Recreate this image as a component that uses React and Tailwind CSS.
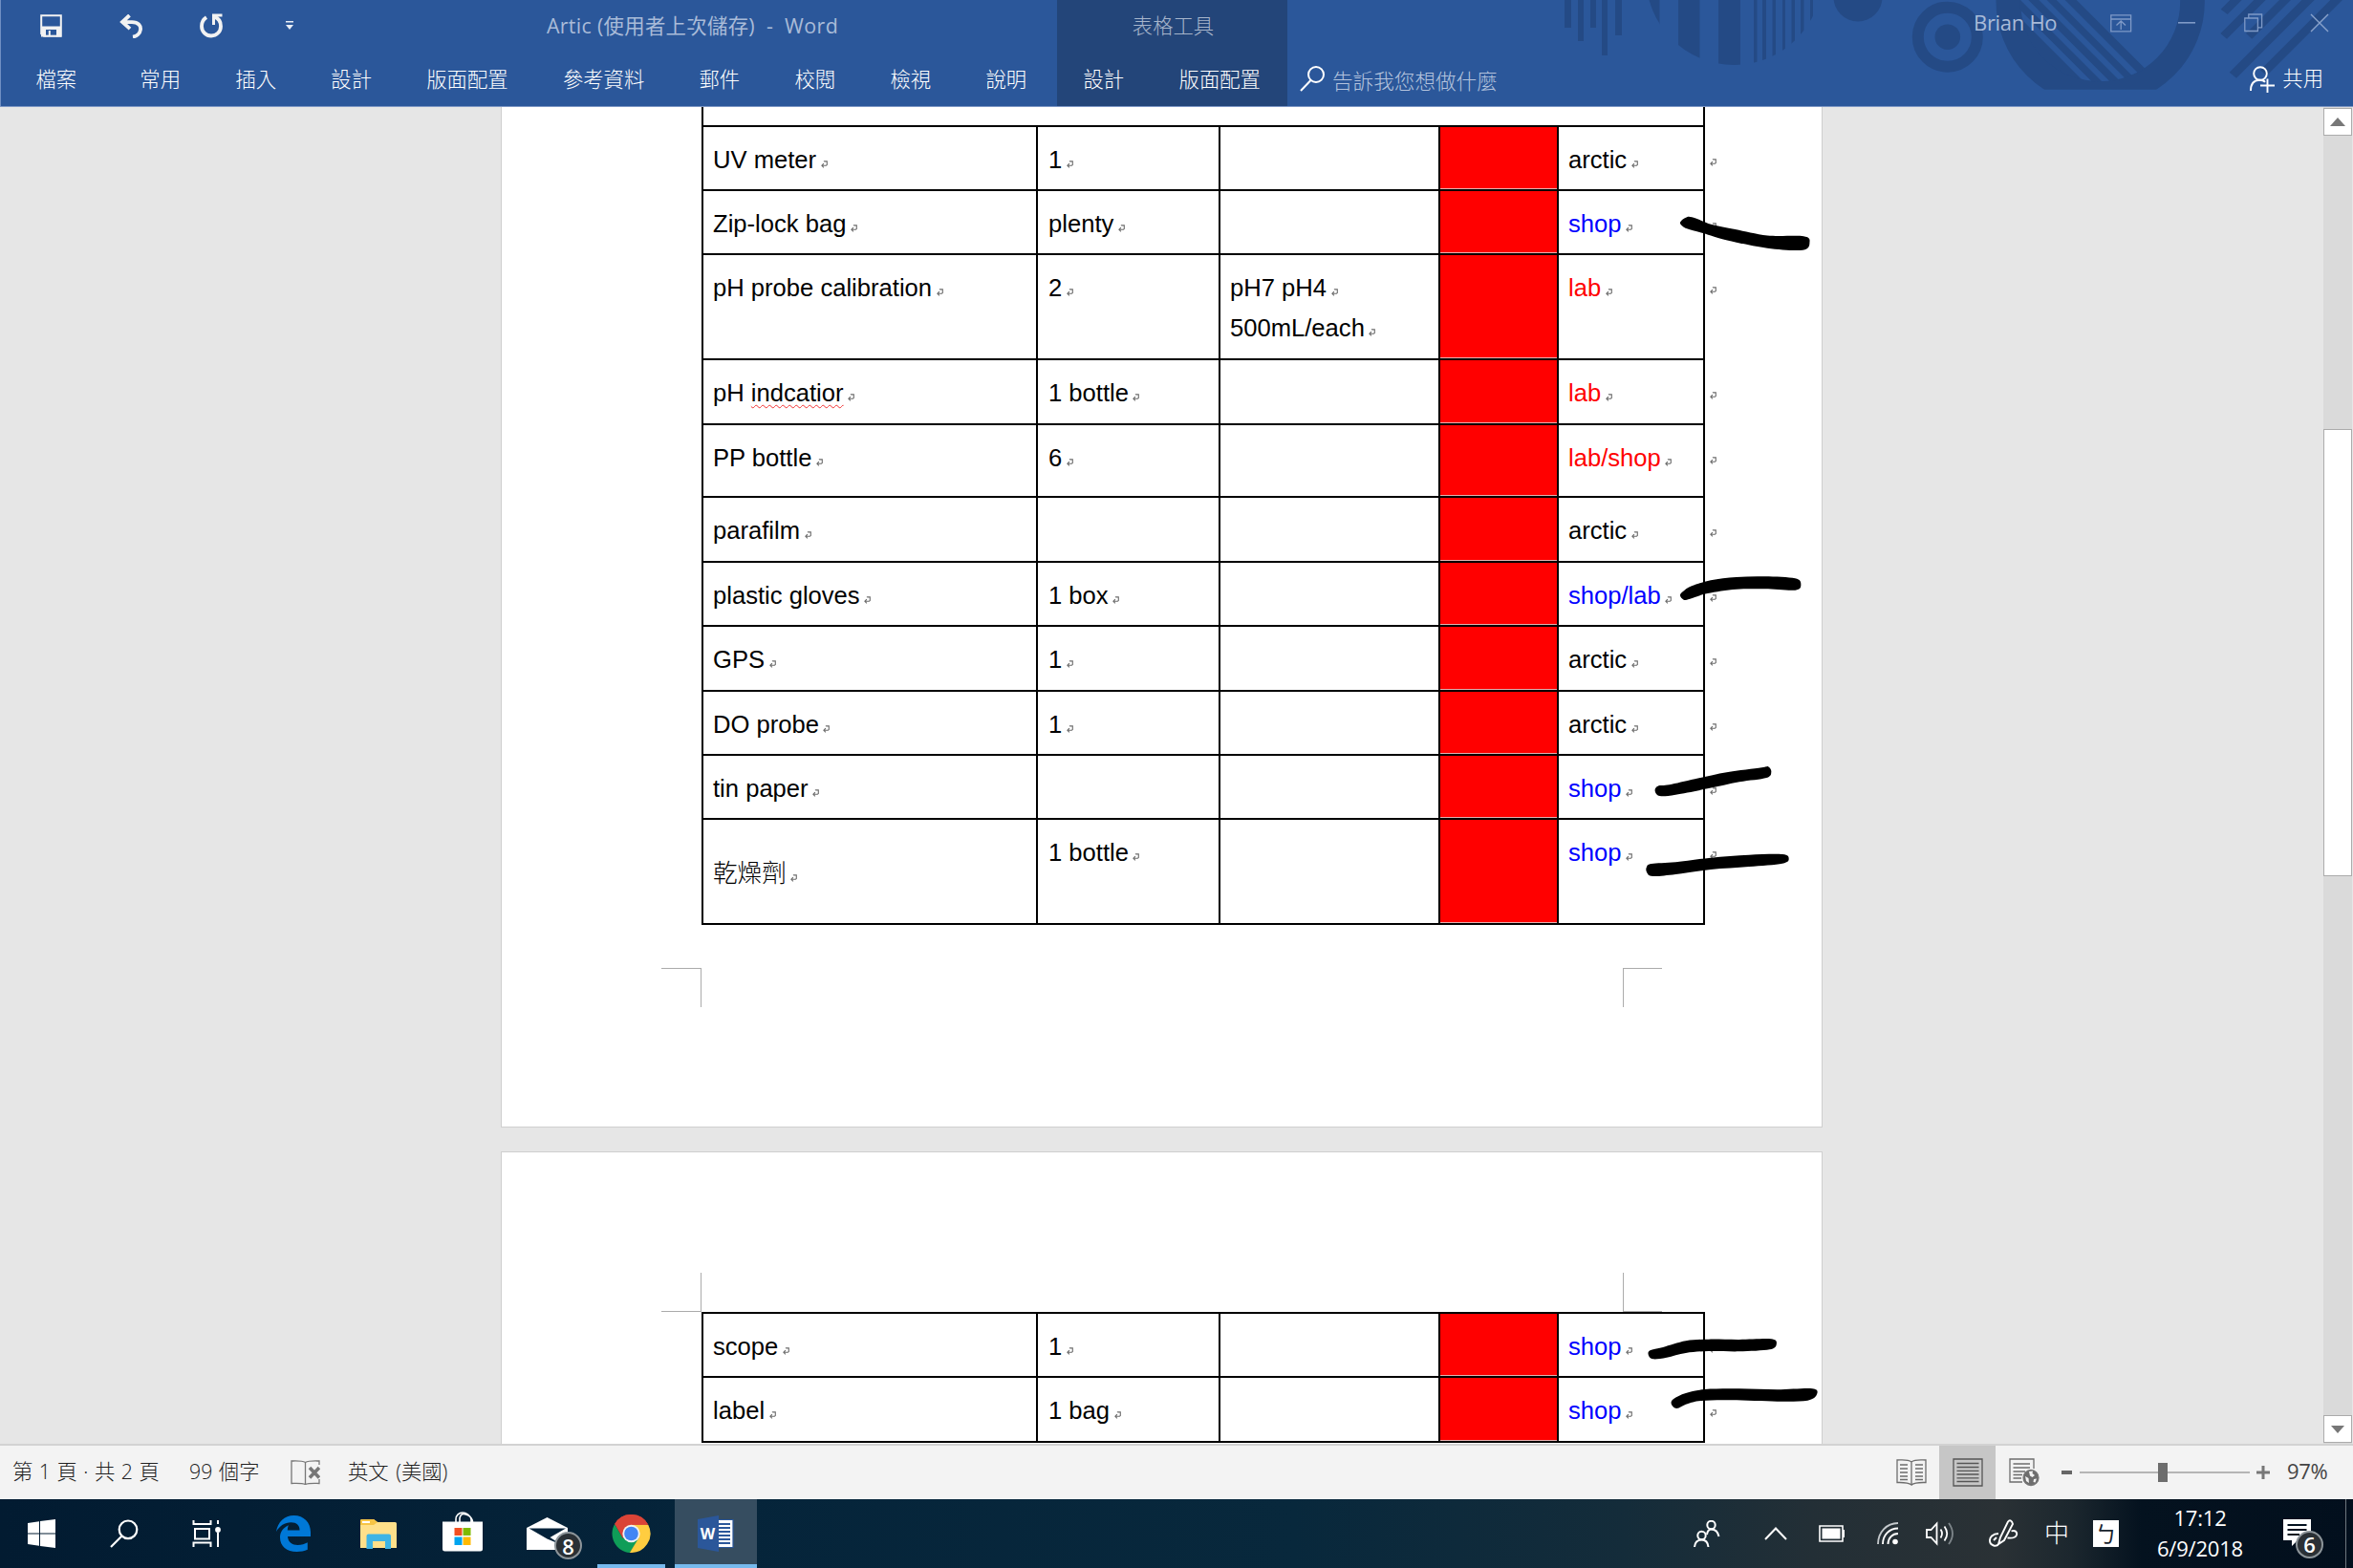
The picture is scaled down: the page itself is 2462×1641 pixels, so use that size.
import React from "react";

const UI = "font-['Open_Sans','Noto_Sans_CJK_TC',sans-serif]";

/* ---------- small helpers ---------- */

// Closed smooth curve through a list of points (Catmull-Rom to Bezier).
function smooth(points) {
  const n = points.length;
  const at = (i) => points[(i + n) % n];
  let d = `M${at(0)[0]} ${at(0)[1]}`;
  for (let i = 0; i < n; i++) {
    const [p0, p1, p2, p3] = [at(i - 1), at(i), at(i + 1), at(i + 2)];
    d += `C${p1[0] + (p2[0] - p0[0]) / 6} ${p1[1] + (p2[1] - p0[1]) / 6} ${p2[0] - (p3[0] - p1[0]) / 6} ${p2[1] - (p3[1] - p1[1]) / 6} ${p2[0]} ${p2[1]}`;
  }
  return d + "Z";
}

function Mark({ className = "" }) {
  return (
    <svg width="7" height="8" viewBox="0 0 7 8" className={`inline-block shrink-0 ${className}`} fill="none" stroke="#6b6b6b" strokeWidth="1.1">
      <path d="M3.4 1.2V.9H6.3V4.4L5.4 5.3H.9M2.9 3.2L.9 5.3L2.9 7.4" />
    </svg>
  );
}

/* ---------- ribbon ---------- */

function RibbonPattern() {
  const bars = [[17, 7, 29], [31, 6, 43], [44, 6, 29], [56, 6, 58], [70, 7, 37]];
  const slices = [[104, 12.5], [136, 22.5], [178, 23], [215, 3.5], [224, 4], [234.5, 3.5], [245, 3], [254.5, 3.5], [264, 3.5], [274, 3], [283, 3]];
  return (
    <svg className="absolute right-0 top-0" width="842" height="111" viewBox="0 0 842 111" fill="#244a85">
      <defs>
        <clipPath id="disc"><circle cx="194.4" cy="-24" r="92" /></clipPath>
        <clipPath id="hole"><circle cx="473" cy="5" r="252" /></clipPath>
        <clipPath id="flat"><rect x="0" y="0" width="1266" height="281" /></clipPath>
      </defs>
      {bars.map(([x, w, h]) => <rect key={x} x={x} width={w} height={h} />)}
      <g clipPath="url(#disc)">
        {slices.map(([x, w]) => <rect key={x} x={x} width={w} height="80" />)}
      </g>
      <circle cx="324" cy="-3" r="25.5" />
      <circle cx="417.8" cy="38.7" r="31" fill="none" stroke="#244a85" strokeWidth="12" />
      <circle cx="417.8" cy="38.7" r="13.3" />
      <g transform="translate(420 0) scale(.33333)">
        <circle cx="473" cy="5" r="289" fill="none" stroke="#244a85" strokeWidth="77" clipPath="url(#flat)" />
        <g clipPath="url(#hole)">
          <path d="M100 0H130L430 300H400ZM130 0H165L465 300H430ZM190 0H222L522 300H490ZM247 0H280L580 300H547ZM305 0H335L635 300H605ZM362 0H398L698 300H662Z" />
        </g>
        <path d="M880 0H917L872 45L851 29ZM955 0H992L870 122L850 105ZM1035 0H1071L949 122L930 105ZM1105 0H1145L900 245L878 227ZM1195 0H1233L995 238L975 220Z" />
      </g>
    </svg>
  );
}

function QuickAccess() {
  return (
    <div className="flex items-center h-[54px] pl-[41px]">
      <svg width="23" height="24" viewBox="0 0 23 24">
        <path d="M1.2 1.2H21.8V22.8H4L1.2 20.2Z" fill="none" stroke="#f2f2f2" strokeWidth="2" />
        <path d="M1 12.5H22V23.5H17V16H6V23.5H1Z" fill="#f2f2f2" />
        <path d="M8.8 17H10.8V23H8.8Z" fill="#f2f2f2" />
        <path d="M5 22.6H18" stroke="#f2f2f2" strokeWidth="1.4" />
      </svg>
      <svg className="ml-[60px]" width="25" height="25" viewBox="0 0 25 25" fill="none" stroke="#f2f2f2" strokeWidth="3.8">
        <path d="M10.5 1L3 8L11 15.2M3.5 8.2H13C20 8.2 22.5 12 22 16C21.5 20 18 23 14 23.6" />
      </svg>
      <svg className="ml-[59px]" width="25" height="26" viewBox="0 0 25 26" fill="none" stroke="#f2f2f2" strokeWidth="3.8">
        <path d="M7 4.2C3.5 6.5 2 10 2 13.4C2 19 6.5 23.5 12 23.5C17.8 23.5 22 19 22 13.4C22 9 19.5 5 15.4 3.6" />
        <path d="M14.5 12V2H23.5" strokeWidth="3" />
      </svg>
      <svg className="ml-[65px]" width="8" height="10" viewBox="0 0 8 10" fill="#e8edf5">
        <path d="M0 0H8V1.5H0ZM0 4H8L4 9Z" />
      </svg>
      <div className={`${UI} ml-[265px] flex whitespace-pre text-[21.4px] leading-[30px] text-[#a9bbd8]`}>
        <span className="w-[230px] tracking-[0.3px]">Artic (使用者上次儲存)</span>
        <span className="w-[19px]">-</span>
        <span className="tracking-[0.5px]">Word</span>
      </div>
    </div>
  );
}

function Ribbon() {
  const tabs = ["常用", "插入", "設計", "版面配置", "參考資料", "郵件", "校閱", "檢視", "說明"];
  return (
    <header className={`${UI} relative flex h-[112px] shrink-0 border-b border-[#7c96c4] bg-[#2b579a] text-[21.33px] text-white`}>
      <RibbonPattern />
      <div className="w-[1106px] border-l border-[#6f8fc2]">
        <QuickAccess />
        <nav className="flex h-[57px] items-center whitespace-nowrap pl-[36.5px] pt-px font-light">
          <span className="mr-[66.2px]">檔案</span>
          <div className="flex gap-[57.3px]">
            {tabs.map((t) => <span key={t}>{t}</span>)}
          </div>
        </nav>
      </div>
      <div className="w-[241px] bg-[#234579]">
        <div className="flex h-[54px] items-center justify-center pl-[2px] font-light text-[#a7b5cb]">表格工具</div>
        <div className="flex h-[57px] items-center gap-[57.4px] pl-[27.5px] pt-px font-light">
          <span>設計</span>
          <span>版面配置</span>
        </div>
      </div>
      <div className="relative flex flex-1 flex-col">
        <div className="flex h-[48px] items-center text-[#a9bbd8]">
          <span className="ml-[718px] w-[143px] whitespace-nowrap pb-[2px] text-[22px] tracking-[-0.3px]">Brian Ho</span>
          <svg width="23" height="19" viewBox="0 0 23 19" fill="none" stroke="#7f9ac7" strokeWidth="1.3">
            <path d="M.8.8H21.6V17.8H.8ZM.8 5H21.6M11.2 16V7.5M6.5 11.5L11.2 7L16 11.5" />
          </svg>
          <svg className="ml-[48px]" width="18" height="2"><rect width="18" height="1.6" fill="#7f9ac7" /></svg>
          <svg className="ml-[51px]" width="20" height="20" viewBox="0 0 20 20" fill="none" stroke="#7f9ac7" strokeWidth="1.3">
            <path d="M.8 5H14.4V18.5H.8ZM4.8 5V1H18.6V14.8H14.4" />
          </svg>
          <svg className="ml-[49px]" width="20" height="20" viewBox="0 0 20 20" stroke="#8aa3cc" strokeWidth="1.4">
            <path d="M1 1L19 19M19 1L1 19" />
          </svg>
        </div>
        <div className="flex h-[63px] items-center pt-[5px] font-light">
          <svg className="ml-[13px]" width="27" height="28" viewBox="0 0 27 28" fill="none" stroke="#fff" strokeWidth="2">
            <circle cx="17" cy="10" r="8" /><path d="M11.5 16L1 27" />
          </svg>
          <span className="ml-[7px] mt-[7px] text-[21.6px] text-[#b4c3dd]">告訴我您想做什麼</span>
          <svg className="ml-auto mt-[2px]" width="27" height="28" viewBox="0 0 27 28" fill="none" stroke="#fff" strokeWidth="1.9">
            <circle cx="11" cy="8" r="6.8" /><path d="M1 26C1 19 4.5 15 10 14.8C13 14.8 15 15.6 16 16.8M18.5 13.5V28M11 20.5H26" />
          </svg>
          <span className="ml-[7px] mr-[31px]">共用</span>
        </div>
      </div>
    </header>
  );
}

/* ---------- document ---------- */

function Cell({ w, lines, color = "text-black", pad = "pl-[10px]" }) {
  return (
    <div className={`${w} ${pad} ${color} border-l-2 border-t-2 border-black pt-[13px]`}>
      {lines.map((line) => (
        <div key={line} className="h-[42px] whitespace-pre leading-[42px]">
          {line === "pH indcatior" ? (
            <>pH <span className="underline decoration-[#f03030] decoration-wavy decoration-[1px] underline-offset-[3px]">indcatior</span></>
          ) : line}
          <Mark className="ml-[4.5px] align-baseline" />
        </div>
      ))}
    </div>
  );
}

function Row({ h, name, qty, note = [], where, color }) {
  const cjk = name === "乾燥劑";
  return (
    <div className={`${h} flex font-['Liberation_Sans','Noto_Sans_CJK_TC',sans-serif] text-[25.6px]`}>
      <Cell w={cjk ? "w-[350px] !pt-[35px] font-light" : "w-[350px]"} lines={[name]} />
      <Cell w="w-[191px]" lines={qty ? [qty] : []} pad="pl-[11px]" />
      <Cell w="w-[230px]" lines={note} />
      <div className="w-[124px] border-l-2 border-t-2 border-black">
        <div className="h-full border-b border-[#e8b0b0] bg-[#ff0000]" />
      </div>
      <Cell w="w-[153px]" lines={[where]} color={color} />
      <div className="w-[2px] bg-black" />
      <Mark className="ml-[5px] mt-[35px]" />
    </div>
  );
}

const BLUE = "text-[#0000ff]";
const RED = "text-[#ff0000]";

const page1 = [
  { h: "h-[67px]", name: "UV meter", qty: "1", where: "arctic" },
  { h: "h-[67px]", name: "Zip-lock bag", qty: "plenty", where: "shop", color: BLUE },
  { h: "h-[110px]", name: "pH probe calibration", qty: "2", note: ["pH7 pH4", "500mL/each"], where: "lab", color: RED },
  { h: "h-[68px]", name: "pH indcatior", qty: "1 bottle", where: "lab", color: RED },
  { h: "h-[76px]", name: "PP bottle", qty: "6", where: "lab/shop", color: RED },
  { h: "h-[68px]", name: "parafilm", where: "arctic" },
  { h: "h-[67px]", name: "plastic gloves", qty: "1 box", where: "shop/lab", color: BLUE },
  { h: "h-[68px]", name: "GPS", qty: "1", where: "arctic" },
  { h: "h-[67px]", name: "DO probe", qty: "1", where: "arctic" },
  { h: "h-[67px]", name: "tin paper", where: "shop", color: BLUE },
  { h: "h-[110px]", name: "乾燥劑", qty: "1 bottle", where: "shop", color: BLUE },
];

const page2 = [
  { h: "h-[67px]", name: "scope", qty: "1", where: "shop", color: BLUE },
  { h: "h-[68px]", name: "label", qty: "1 bag", where: "shop", color: BLUE },
];

// Pen strokes: each has its own local coordinate space.
const strokes = [
  { t: "translate(1260 -12) scale(.4209 .35714)", p: [[1200, 356], [1222, 360], [1262, 378], [1320, 392], [1400, 410], [1490, 412], [1505, 430], [1488, 453], [1400, 447], [1300, 424], [1240, 403], [1200, 390], [1183, 373]] },
  { t: "translate(1480 448) scale(.33333)", p: [[842, 178], [870, 160], [930, 142], [1010, 132], [1100, 130], [1195, 136], [1213, 155], [1195, 173], [1100, 169], [1010, 170], [920, 183], [865, 200], [845, 203], [834, 190]] },
  { t: "translate(1480 448) scale(.33333)", p: [[764, 788], [800, 784], [880, 766], [980, 745], [1090, 730], [1110, 727], [1120, 743], [1105, 762], [1020, 775], [920, 796], [820, 815], [770, 819], [755, 803]] },
  { t: "translate(1480 448) scale(.33333)", p: [[729, 1042], [744, 1032], [820, 1027], [930, 1013], [1050, 1004], [1155, 1002], [1175, 1016], [1155, 1031], [1050, 1041], [930, 1050], [820, 1065], [748, 1071], [729, 1058]] },
  { t: "translate(680 1068) scale(.797 .33333)", p: [[1313, 700], [1330, 690], [1360, 670], [1390, 665], [1430, 666], [1472, 664], [1479, 680], [1470, 697], [1430, 703], [1390, 702], [1360, 708], [1335, 722], [1317, 727], [1311, 715]] },
  { t: "translate(680 1068) scale(.797 .33333)", p: [[1344, 852], [1360, 834], [1385, 822], [1430, 820], [1480, 823], [1526, 820], [1532, 838], [1520, 857], [1480, 860], [1420, 856], [1380, 858], [1362, 868], [1348, 882], [1341, 868]] },
];

function Ink() {
  return (
    <svg className="absolute left-[1700px] top-0" width="240" height="1399" viewBox="1700 0 240 1399">
      {strokes.map((s, i) => <path key={i} transform={s.t} d={smooth(s.p)} />)}
    </svg>
  );
}

function Document() {
  return (
    <main className="relative h-[1399px] w-[2431px] overflow-hidden bg-[#e6e6e6] pl-[524px]">
      <section className="h-[1068px] w-[1383px] border-x border-b border-[#cfcfcf] bg-white">
        <div className="ml-[209px] h-[19px] w-[1050px] border-x-2 border-black" />
        <div className="ml-[209px]">
          {page1.map((r) => <Row key={r.name} {...r} />)}
          <div className="h-[2px] w-[1050px] bg-black" />
        </div>
        <div className="ml-[167px] mt-[45px] flex w-[1047px] justify-between">
          <div className="h-[41px] w-[42px] border-r border-t border-[#ababab]" />
          <div className="h-[41px] w-[41px] border-l border-t border-[#ababab]" />
        </div>
      </section>
      <section className="mt-[25px] h-[320px] w-[1383px] border border-[#cfcfcf] bg-white">
        <div className="ml-[167px] mt-[126px] flex w-[1047px] justify-between">
          <div className="h-[41px] w-[42px] border-b border-r border-[#ababab]" />
          <div className="h-[41px] w-[41px] border-b border-l border-[#ababab]" />
        </div>
        <div className="ml-[209px]">
          {page2.map((r) => <Row key={r.name} {...r} />)}
          <div className="h-[2px] w-[1050px] bg-black" />
        </div>
      </section>
      <Ink />
    </main>
  );
}

function Scrollbar() {
  return (
    <aside className="flex w-[31px] flex-col border-r border-[#e6e6e6] bg-[#dadada]">
      <div className="mt-px flex h-[29px] items-center justify-center border border-[#ababab] bg-white">
        <svg width="16" height="9"><path d="M0 9L8 0L16 9Z" fill="#777" /></svg>
      </div>
      <div className="mt-[307px] h-[468px] border border-[#ababab] bg-white" />
      <div className="mb-px mt-auto flex h-[29px] items-center justify-center border border-[#ababab] bg-white">
        <svg width="14" height="8"><path d="M0 0L7 8L14 0Z" fill="#777" /></svg>
      </div>
    </aside>
  );
}

/* ---------- status bar ---------- */

function StatusBar() {
  return (
    <footer className={`${UI} flex h-[58px] shrink-0 items-center whitespace-nowrap border-t-2 border-[#d2d2d2] bg-[#f3f3f3] text-[21.3px] font-light text-[#222]`}>
      <span className="mb-[3px] ml-[13px] w-[185px] [word-spacing:1px]">第 1 頁 · 共 2 頁</span>
      <span className="mb-[3px] w-[106px] [word-spacing:1px]">99 個字</span>
      <svg width="31" height="26" viewBox="0 0 31 26" fill="none" stroke="#777" strokeWidth="1.3">
        <path d="M15.5 2.5C12 .5 5 1 1 1V24.5C5 24.5 12 24 15.5 25.5ZM15.5 2.5C19 .5 26 1 30 1V5M15.5 25.5C19 24 26 24.5 30 24.5V20" />
        <path d="M20 8L30 18.5M30 8L20 18.5" strokeWidth="3.6" />
      </svg>
      <span className="mb-[3px] ml-[29px] [word-spacing:2px]">英文 (美國)</span>
      <div className="ml-auto flex h-full items-center">
        <svg width="32" height="28" viewBox="0 0 32 28" fill="none" stroke="#6d6d6d" strokeWidth="1.3">
          <path d="M16 3C12 0 6 1 1 1V24.5C6 24.5 12 24 16 27ZM16 3C20 0 26 1 31 1V24.5C26 24.5 20 24 16 27" />
          <path d="M4 6H12M4 10H12M4 14H12M4 18H12M4 21.5H12M20 6H28M20 10H28M20 14H28M20 18H28M20 21.5H28" />
        </svg>
        <div className="ml-[13px] flex h-full w-[59px] items-center justify-center bg-[#c6c6c6]">
          <svg width="32" height="30" viewBox="0 0 32 30" fill="none" stroke="#555" strokeWidth="1.3">
            <path d="M1 1H31V29H1ZM4.5 5.5H27.5M4.5 9.5H27.5M4.5 13.3H27.5M4.5 17H27.5M4.5 20.8H27.5M4.5 24.5H27.5" />
          </svg>
        </div>
        <svg className="ml-[14px]" width="32" height="30" viewBox="0 0 32 30" fill="none" stroke="#6d6d6d" strokeWidth="1.3">
          <path d="M26 11V1H1V25H14M4.5 6H22M4.5 10H22M4.5 14H17M4.5 17.5H14M4.5 21H13" />
          <circle cx="23" cy="20.5" r="8" fill="#6d6d6d" stroke="#777" />
          <path d="M21 14L25 13.5L24.5 16L27 18L24.5 20L22 18.5ZM17 19L20.5 21L21 26L18 24ZM26 22L29 21.5L27.5 25.5L25.5 25Z" fill="#f3f3f3" stroke="none" />
        </svg>
        <div className="ml-[23px] h-[4px] w-[11px] bg-[#666]" />
        <div className="ml-[8px] flex w-[178px] items-center">
          <div className="h-[2px] w-[82px] bg-[#b5b5b5]" />
          <div className="h-[20px] w-[10px] bg-[#6d6d6d]" />
          <div className="h-[2px] flex-1 bg-[#b5b5b5]" />
        </div>
        <svg className="ml-[7px]" width="14" height="14" stroke="#777" strokeWidth="3"><path d="M0 7H14M7 0V14" /></svg>
        <span className="mb-[3px] ml-[18px] w-[69px] text-[22px] font-normal tracking-[-0.3px] text-[#444]">97%</span>
      </div>
    </footer>
  );
}

/* ---------- taskbar ---------- */

function Badge({ children, className }) {
  return (
    <span className={`${className} absolute flex h-[29px] w-[29px] items-center justify-center rounded-full border-2 border-[#8d959a] bg-[#2a3035] text-[22px] font-semibold leading-none text-white`}>
      {children}
    </span>
  );
}

function ChromeIcon() {
  return (
    <svg width="41" height="40" viewBox="0 0 48 48">
      <path d="M24 24L3.2 12A24 24 0 0 1 44.8 12Z" fill="#db4437" />
      <path d="M3.2 12A24 24 0 0 0 22 47.9L34.4 30L24 24L13.6 30Z" fill="#0f9d58" />
      <path d="M24 13H45.3A24 24 0 0 1 22 47.9L33.5 29.5Z" fill="#ffcd40" />
      <path d="M3.2 12A24 24 0 0 1 45.3 13H24L13.6 30Z" fill="#db4437" />
      <circle cx="24" cy="24" r="11" fill="#f1f1f1" />
      <circle cx="24" cy="24" r="8.8" fill="#4285f4" />
    </svg>
  );
}

function WordIcon() {
  return (
    <svg width="38" height="38" viewBox="0 0 38 38">
      <path d="M20 4.5H37V33.5H20Z" fill="#fff" stroke="#2b579a" strokeWidth="1.2" />
      <path d="M22 9H34M22 13H34M22 17H34M22 21H34M22 25H34M22 29H34" stroke="#2b579a" strokeWidth="2" />
      <path d="M0 4L22 0V38L0 34Z" fill="#2b579a" />
      <text x="10.5" y="25" textAnchor="middle" fill="#fff" fontSize="16" fontWeight="700" fontFamily="Open Sans">W</text>
    </svg>
  );
}

function Taskbar() {
  return (
    <div className={`${UI} flex h-[72px] shrink-0 items-center bg-[linear-gradient(90deg,#021b31_0%,#05243a_30%,#08283c_55%,#142c3a_69%,#232f36_77%,#2a3135_85%,#1c272e_88%,#04121f_91%,#020f1d_100%)]`}>
      <svg className="ml-[29px]" width="29" height="30" viewBox="0 0 29 30" fill="#fff">
        <path d="M0 4L12 2.2V14.4H0ZM13 2L29 0V14.4H13ZM0 15.5H12V27.7L0 26ZM13 15.5H29V30L13 27.9Z" />
      </svg>
      <svg className="ml-[57px]" width="30" height="30" viewBox="0 0 30 30" fill="none" stroke="#fff" strokeWidth="2.2">
        <circle cx="19" cy="10.8" r="9.3" /><path d="M12.5 17.5L1 29" />
      </svg>
      <svg className="ml-[56px]" width="30" height="28" viewBox="0 0 30 28" fill="none" stroke="#fff" strokeWidth="2">
        <path d="M1.5 0V4H19.5V0M1.5 28V23.5H19.5V28M3 9H18V19.5H3ZM27 0V4M27 13V28" /><circle cx="27" cy="10" r="2.9" fill="#fff" stroke="none" />
      </svg>
      <svg className="ml-[58px]" width="36" height="38" viewBox="0 0 36 38" fill="#0078d7">
        <path d="M0 17C1.5 7 8.5 0 18.5 0C29 0 36 7.5 36 17.5V22H12C12.3 28 17 31 22.5 31C26.5 31 30 29.8 32.8 28.2V35.8C29.5 37.4 25.5 38 21.5 38C11 38 4 32 4 23C4 17 7.5 12.5 13 10.2C12.3 11.5 11.9 13.4 11.8 15.5H24.5C24.5 10.5 21.5 7.3 15.5 7.3C9 7.3 3.5 11 0 17Z" />
      </svg>
      <svg className="ml-[52px]" width="38" height="31" viewBox="0 0 38 31">
        <path d="M0 1.5Q0 0 1.5 0H14L18 3H36.5Q38 3 38 4.5V30H0Z" fill="#ffe08a" />
        <path d="M0 1.5Q0 0 1.5 0H14L18 3L14 6H0Z" fill="#f6c445" /><path d="M2 2H10V4H2Z" fill="#fff" />
        <path d="M6.5 31V17.5Q6.5 15.5 8.5 15.5H30Q32 15.5 32 17.5V31H26V23H13V31Z" fill="#3eb4e5" />
      </svg>
      <svg className="mb-[4px] ml-[48px]" width="42" height="42" viewBox="0 0 42 42">
        <path d="M14 11V8C14 3.5 17.5 1 21 1S29 3.5 30 8V11M18 11V7C18.5 4 20 2.5 22 2.5S31 4 31.5 11" fill="none" stroke="#fff" strokeWidth="1.6" />
        <path d="M0 10.5H42V39Q42 41.5 39.5 41.5H2.5Q0 41.5 0 39Z" fill="#fff" />
        <path d="M12.5 17H20.5V25H12.5Z" fill="#f25022" /><path d="M21.5 17H29.5V25H21.5Z" fill="#7fba00" />
        <path d="M12.5 26.5H20.5V35H12.5Z" fill="#00a4ef" /><path d="M21.5 26.5H29.5V35H21.5Z" fill="#ffb900" />
      </svg>
      <div className="relative ml-[46px]">
        <svg width="43" height="34" viewBox="0 0 43 34">
          <path d="M0 11L21.5 0L43 11V34H0Z" fill="#fff" /><path d="M2.5 11.5H41L24.5 21L37 29L21.5 22.5Z" fill="#04223a" />
        </svg>
        <Badge className="left-[29px] top-[15px]">8</Badge>
      </div>
      <div className="ml-[31px] flex h-full w-[71px] flex-col items-center justify-end border-b-4 border-[#76b9ed] pb-[12px]">
        <ChromeIcon />
      </div>
      <div className="ml-[10px] flex h-full w-[86px] flex-col items-center justify-end border-b-4 border-[#76b9ed] bg-[#364d60] pb-[13px]">
        <WordIcon />
      </div>

      <div className="ml-auto flex h-full items-center">
        <svg width="28" height="28" viewBox="0 0 28 28" fill="none" stroke="#fff" strokeWidth="2">
          <circle cx="18.5" cy="5" r="4.2" /><path d="M14 15C14.5 11.5 16 9.5 18.5 9.5C22.5 9.5 25.5 12 26.5 17" />
          <circle cx="8.5" cy="16" r="4.2" /><path d="M1 28C1.5 23 4 20.5 8.5 20.5S15 23 15.5 28" />
        </svg>
        <svg className="ml-[46px]" width="24" height="14" viewBox="0 0 24 14" fill="none" stroke="#fff" strokeWidth="2"><path d="M1 13L12 1.5L23 13" /></svg>
        <svg className="ml-[33px]" width="27" height="18" viewBox="0 0 27 18">
          <path d="M1 1H25V17H1Z" fill="none" stroke="#fff" strokeWidth="1.6" /><path d="M3.5 3.5H22.5V14.5H3.5ZM25 5H27V13H25Z" fill="#fff" />
        </svg>
        <svg className="ml-[34px]" width="22" height="24" viewBox="0 0 22 24" fill="none" stroke="#fff" strokeWidth="1.9">
          <path d="M1 23C1 10.5 10 1 22 1" stroke="#c4c9cc" /><path d="M6 23C6 13.5 13 6.5 22 6.5M11.5 23C11.5 16.5 16 12 22 12" /><circle cx="19" cy="20.5" r="2.8" fill="#fff" stroke="none" />
        </svg>
        <svg className="ml-[29px]" width="31" height="26" viewBox="0 0 31 26" fill="none" stroke="#fff" strokeWidth="1.8">
          <path d="M1 9H5.5L11.5 2.5V23.5L5.5 17H1ZM15.5 8.5Q18.5 13 15.5 17.5M19.5 5.5Q25 13 19.5 20.5" /><path d="M24 2Q32 13 24 24" stroke="#7d8589" />
        </svg>
        <svg className="ml-[35px]" width="31" height="30" viewBox="0 0 31 30" fill="none" stroke="#fff" strokeWidth="1.9">
          <path d="M10 26L12 19L20 2.5Q22 0 24 2.5L25 5L16 22Z" /><path d="M10 15C4 15 .5 19 1 23C1.5 28 8 29 10 26M23.5 12.5C27 11 30 13 29 16.5C28 19 24 20 19.5 19.5M8 19L5 22" />
        </svg>
        <span className="mb-[2px] ml-[27px] w-[26px] text-[26px] font-light leading-none text-white">中</span>
        <span className="ml-[25px] flex h-[28px] w-[27px] items-center justify-center bg-white text-[23px] leading-none text-[#17232d]">ㄅ</span>
        <div className="mb-[2px] ml-[32px] flex w-[106px] flex-col items-center text-[22px] leading-[32px] tracking-[-0.2px] text-white">
          <span>17:12</span>
          <span>6/9/2018</span>
        </div>
        <div className="relative mb-[3px] ml-[34px] mr-[36px]">
          <svg width="29" height="28" viewBox="0 0 29 28"><path d="M0 0H29V22H15L9 28V22H0Z" fill="#fff" /><path d="M4.5 6H24.5M4.5 11H24.5M4.5 16H17" stroke="#04121f" strokeWidth="1.9" /></svg>
          <Badge className="left-[13px] top-[12px]">6</Badge>
        </div>
        <div className="h-full w-[8px] border-l border-[#6e777e]" />
      </div>
    </div>
  );
}

export default function App() {
  return (
    <div className="flex h-[1641px] w-[2462px] flex-col overflow-hidden bg-[#e6e6e6]">
      <Ribbon />
      <div className="flex h-[1399px]">
        <Document />
        <Scrollbar />
      </div>
      <StatusBar />
      <Taskbar />
    </div>
  );
}
